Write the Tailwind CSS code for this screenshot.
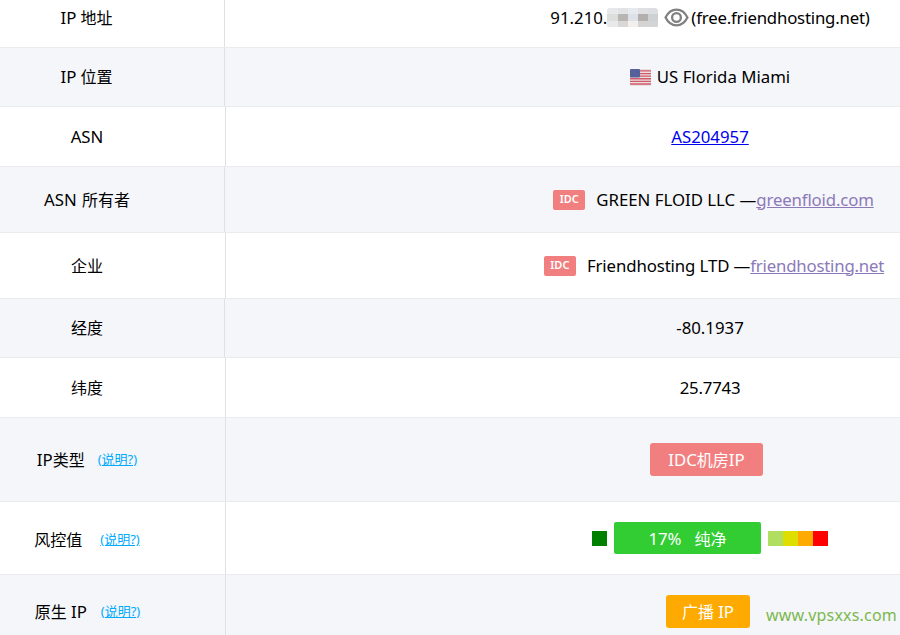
<!DOCTYPE html>
<html lang="zh">
<head>
    <meta charset="UTF-8">
    <title>IP 信息</title>
    <script src="https://cdn.jsdelivr.net/npm/@tailwindcss/browser@4"></script>
</head>
<body class="bg-white text-black overflow-hidden h-[635px] font-['Noto_Sans','Noto_Sans_CJK_SC',sans-serif] text-[16px]">
    <div class="relative h-[635px] overflow-hidden">
        <div class="-mt-[12px]">
            <!-- IP 地址 -->
            <div class="flex h-[60px] border-b border-[#e9ebef]">
                <div class="w-[225px] shrink-0 border-r border-[#dfe0e3] pr-[51px] flex items-center justify-center"><span><span class="text-[16.800px]">IP</span> 地址</span></div>
                <div class="flex-1 pl-[295px] flex items-center justify-center whitespace-nowrap text-[16.800px]">
                    91.210.
                    <span class="grid grid-cols-5 grid-rows-3 w-[51px] h-[20px] overflow-hidden rounded-[3px]">
                        <i class="bg-[#e6e8ea]"></i><i class="bg-[#e2e3e5]"></i><i class="bg-[#e6e9ee]"></i><i class="bg-[#dfe0e2]"></i><i class="bg-[#dcdee1]"></i>
                        <i class="bg-[#dcdddd]"></i><i class="bg-[#b9b5b3]"></i><i class="bg-[#dde2e8]"></i><i class="bg-[#b3afac]"></i><i class="bg-[#ced1d4]"></i>
                        <i class="bg-[#e8e9ea]"></i><i class="bg-[#dad8d6]"></i><i class="bg-[#f2f0ec]"></i><i class="bg-[#d6d4d2]"></i><i class="bg-[#d2d4d6]"></i>
                    </span>
                    <svg class="ml-[6px] mr-[2px] w-[25px] h-[25px]" viewBox="0 0 24 24" fill="none" stroke="#808080" stroke-width="2.200">
                        <path d="M1.500 12C4 7 7.500 4.500 12 4.500S20 7 22.500 12C20 17 16.500 19.500 12 19.500S4 17 1.500 12z"/>
                        <circle cx="12" cy="12" r="4.200"/>
                    </svg>
                    <span class="tracking-[-0.2px]">(free.friendhosting.net)</span>
                </div>
            </div>
            <!-- IP 位置 -->
            <div class="flex h-[59px] bg-[#f5f6fa] border-b border-[#e9ebef]">
                <div class="w-[225px] shrink-0 border-r border-[#dfe0e3] pr-[51px] flex items-center justify-center"><span><span class="text-[16.800px]">IP</span> 位置</span></div>
                <div class="flex-1 pl-[295px] flex items-center justify-center whitespace-nowrap text-[16.800px]">
                    <svg class="mr-[6px] w-[21px] h-[17px]" viewBox="0 0 21 17">
                        <rect width="21" height="17" rx="1.500" fill="#ecdfe2"/>
                        <path d="M0 1.300h21v1.300H0zM0 3.900h21v1.300H0zM0 6.500h21v1.300H0zM0 9.100h21v1.300H0zM0 11.700h21v1.300H0zM0 14.300h21v1.400H0z" fill="#cf5a68"/>
                        <rect width="10" height="8.500" rx="1" fill="#56609a"/>
                    </svg>
                    US Florida Miami
                </div>
            </div>
            <!-- ASN -->
            <div class="flex h-[60px] border-b border-[#e9ebef]">
                <div class="w-[226px] shrink-0 border-r border-[#dfe0e3] pr-[51px] flex items-center justify-center text-[16.800px]">ASN</div>
                <div class="flex-1 pl-[294px] flex items-center justify-center text-[16.800px]">
                    <a href="#" class="text-[#0000ee] underline">AS204957</a>
                </div>
            </div>
            <!-- ASN 所有者 -->
            <div class="flex h-[66px] bg-[#f5f6fa] border-b border-[#e9ebef]">
                <div class="w-[225px] shrink-0 border-r border-[#dfe0e3] pr-[50px] flex items-center justify-center"><span><span class="text-[16.800px] mr-[1px]">ASN</span> 所有者</span></div>
                <div class="flex-1 pl-[302px] flex items-center justify-center whitespace-nowrap text-[16.800px]">
                    <span class="mr-[11px] w-[32px] h-[20px] bg-[#f27f7f] rounded-[2px] text-white text-[11px] font-semibold flex items-center justify-center">IDC</span>
                    GREEN FLOID LLC —<a href="#" class="text-[#8c7ab8] underline tracking-[-0.15px]">greenfloid.com</a>
                </div>
            </div>
            <!-- 企业 -->
            <div class="flex h-[66px] border-b border-[#e9ebef]">
                <div class="w-[226px] shrink-0 border-r border-[#dfe0e3] pr-[51px] flex items-center justify-center">企业</div>
                <div class="flex-1 pl-[302px] flex items-center justify-center whitespace-nowrap text-[16.800px] tracking-[-0.1px]">
                    <span class="mr-[11px] w-[32px] h-[20px] bg-[#f27f7f] rounded-[2px] text-white text-[11px] font-semibold tracking-normal flex items-center justify-center">IDC</span>
                    Friendhosting LTD —<a href="#" class="text-[#8c7ab8] underline tracking-[-0.2px]">friendhosting.net</a>
                </div>
            </div>
            <!-- 经度 -->
            <div class="flex h-[59px] bg-[#f5f6fa] border-b border-[#e9ebef]">
                <div class="w-[225px] shrink-0 border-r border-[#dfe0e3] pr-[50px] flex items-center justify-center">经度</div>
                <div class="flex-1 pl-[295px] flex items-center justify-center text-[16.800px]">-80.1937</div>
            </div>
            <!-- 纬度 -->
            <div class="flex h-[60px] border-b border-[#e9ebef]">
                <div class="w-[226px] shrink-0 border-r border-[#dfe0e3] pr-[51px] flex items-center justify-center">纬度</div>
                <div class="flex-1 pl-[294px] flex items-center justify-center text-[16.800px] tracking-[-0.2px]">25.7743</div>
            </div>
            <!-- IP类型 -->
            <div class="flex h-[84px] bg-[#f5f6fa] border-b border-[#e9ebef]">
                <div class="w-[226px] shrink-0 border-r border-[#dfe0e3] pr-[51px] flex items-center justify-center gap-[13px]">
                    <span><span class="text-[16.800px]">IP</span>类型</span> <a href="#" class="text-[#00aaff] underline text-[13px]">(说明?)</a>
                </div>
                <div class="flex-1 pl-[287px] flex items-center justify-center">
                    <span class="w-[113px] h-[33px] bg-[#f27f7f] rounded-[3px] text-white flex items-center justify-center"><span class="text-[16.800px]">IDC</span>机房<span class="text-[16.800px]">IP</span></span>
                </div>
            </div>
            <!-- 风控值 -->
            <div class="flex h-[73px] border-b border-[#e9ebef]">
                <div class="w-[226px] shrink-0 border-r border-[#dfe0e3] pr-[51px] pt-[3px] flex items-center justify-center gap-[18px]">
                    风控值 <a href="#" class="text-[#00aaff] underline text-[13px] pt-[1px]">(说明?)</a>
                </div>
                <div class="flex-1 pl-[294px] flex items-center justify-center">
                    <span class="w-[15px] h-[15px] bg-[#008000]"></span>
                    <span class="mx-[7px] w-[147px] h-[32px] bg-[#32cd32] rounded-[2px] text-white flex items-center justify-center gap-[13px] pt-[1px]"><span class="text-[16.800px]">17%</span><span>纯净</span></span>
                    <span class="flex">
                        <i class="w-[15px] h-[15px] bg-[#b0de60]"></i><i class="w-[15px] h-[15px] bg-[#dede00]"></i><i class="w-[15px] h-[15px] bg-[#ffaa00]"></i><i class="w-[15px] h-[15px] bg-[#ff0000]"></i>
                    </span>
                </div>
            </div>
            <!-- 原生 IP -->
            <div class="flex h-[73px] bg-[#f5f6fa]">
                <div class="w-[226px] shrink-0 border-r border-[#dfe0e3] pr-[50px] flex items-center justify-center gap-[14px]">
                    <span>原生 <span class="text-[16.800px]">IP</span></span> <a href="#" class="text-[#00aaff] underline text-[13px]">(说明?)</a>
                </div>
                <div class="flex-1 pl-[290px] flex items-center justify-center">
                    <span class="w-[84px] h-[33px] bg-[#ffaa00] rounded-[3px] text-white flex items-center justify-center">广播&nbsp;<span class="text-[16.800px]">IP</span></span>
                </div>
            </div>
        </div>
        <!-- watermark -->
        <div class="absolute right-[3px] bottom-[8px] text-[#7cb84f] text-[16px] tracking-[0.2px]">www.vpsxxs.com</div>
    </div>
</body>
</html>
